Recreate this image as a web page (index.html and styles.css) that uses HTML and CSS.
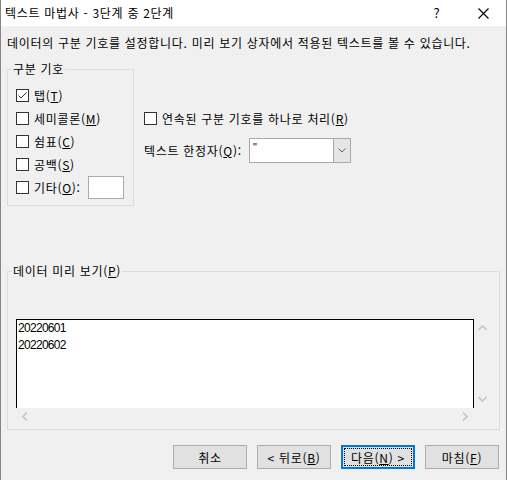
FILE: index.html
```html
<!DOCTYPE html>
<html lang="ko">
<head>
    <meta charset="UTF-8">
    <meta name="viewport" content="width=device-width, initial-scale=1.0">
    <title>텍스트 마법사 - 3단계 중 2단계</title>
    <link rel="stylesheet" href="styles.css">
</head>
<body>
    <div class="window">
        <!-- Title bar -->
        <div class="titlebar">
            <span class="title">텍스트 마법사 - 3단계 중 2단계</span>
            <span class="caption-btn">?</span>
            <span class="caption-btn">
                <svg width="11" height="11" viewBox="0 0 11 11"><path d="M0.5 0.5 L10.5 10.5 M10.5 0.5 L0.5 10.5" stroke="#000" stroke-width="1.1" fill="none"/></svg>
            </span>
        </div>

        <div class="content">
            <p class="desc">데이터의 구분 기호를 설정합니다. 미리 보기 상자에서 적용된 텍스트를 볼 수 있습니다.</p>

            <div class="top-row">
                <!-- Delimiters -->
                <fieldset class="group delims">
                    <legend>구분 기호</legend>
                    <div class="group-inner">
                        <label class="check">
                            <span class="box"><svg width="11" height="11" viewBox="0 0 11 11"><path d="M1.5 5.5 L4 8 L9.5 2.5" stroke="#333" stroke-width="1" fill="none"/></svg></span>
                            탭(<u>T</u>)
                        </label>
                        <label class="check"><span class="box"></span>세미콜론(<u>M</u>)</label>
                        <label class="check"><span class="box"></span>쉼표(<u>C</u>)</label>
                        <label class="check"><span class="box"></span>공백(<u>S</u>)</label>
                        <label class="check"><span class="box"></span>기타(<u>O</u>):<span class="other-input"></span></label>
                    </div>
                </fieldset>

                <div class="options">
                    <label class="check"><span class="box"></span>연속된 구분 기호를 하나로 처리(<u>R</u>)</label>
                    <div class="qualifier">
                        <span class="qualifier-label">텍스트 한정자(<u>Q</u>):</span>
                        <div class="combo">
                            <span class="combo-value">"</span>
                            <span class="combo-btn">
                                <svg width="8" height="5" viewBox="0 0 8 5"><path d="M0.5 0.5 L4 4 L7.5 0.5" stroke="#606060" stroke-width="1" fill="none"/></svg>
                            </span>
                        </div>
                    </div>
                </div>
            </div>

            <!-- Data preview -->
            <fieldset class="group preview">
                <legend>데이터 미리 보기(<u>P</u>)</legend>
                <div class="preview-inner">
                    <div class="preview-main">
                        <div class="preview-box">20220601<br>20220602</div>
                        <div class="hscroll">
                            <svg width="6" height="9" viewBox="0 0 6 9"><path d="M5 0.5 L1 4.5 L5 8.5" stroke="#c4c4c4" stroke-width="1.6" fill="none"/></svg>
                            <svg width="6" height="9" viewBox="0 0 6 9"><path d="M1 0.5 L5 4.5 L1 8.5" stroke="#c4c4c4" stroke-width="1.6" fill="none"/></svg>
                        </div>
                    </div>
                    <div class="vscroll">
                        <svg width="9" height="6" viewBox="0 0 9 6"><path d="M0.5 5 L4.5 1 L8.5 5" stroke="#c4c4c4" stroke-width="1.6" fill="none"/></svg>
                        <svg width="9" height="6" viewBox="0 0 9 6"><path d="M0.5 1 L4.5 5 L8.5 1" stroke="#c4c4c4" stroke-width="1.6" fill="none"/></svg>
                    </div>
                </div>
            </fieldset>

            <!-- Buttons -->
            <div class="buttons">
                <button class="btn">취소</button>
                <button class="btn">&lt; 뒤로(<u>B</u>)</button>
                <button class="btn btn-default">다음(<u>N</u>) &gt;</button>
                <button class="btn">마침(<u>F</u>)</button>
            </div>
        </div>
    </div>
</body>
</html>
```

FILE: styles.css
```css
* {
    box-sizing: border-box;
}

body {
    margin: 0;
    background-color: #f0f0f0;
    font-family: "Noto Sans CJK KR", "Noto Sans", sans-serif;
    font-size: 12px;
    letter-spacing: 0.7px;
    color: #000;
}

.window {
    width: 507px;
    height: 480px;
    border-left: 1px solid #858585;
    border-right: 1px solid #858585;
    background-color: #f0f0f0;
}

/* Title bar */
.titlebar {
    display: flex;
    align-items: center;
    height: 26px;
    background-color: #fff;
    line-height: 26px;
}

.title {
    flex: 1;
    padding-left: 4px;
}

.caption-btn {
    width: 46px;
    display: flex;
    justify-content: center;
    align-items: center;
    font-size: 13px;
}

.content {
    padding: 0 6px 0 6px;
}

.desc {
    margin: 8px 0 0 0;
    line-height: 17px;
    white-space: nowrap;
}

/* Group boxes */
.group {
    margin: 0;
    padding: 0;
    border: 1px solid #dcdcdc;
    min-width: 0;
}

.group legend {
    margin-left: 4px;
    padding: 0 1px;
    line-height: 14px;
}

.top-row {
    display: flex;
    margin-top: 11px;
}

.delims {
    width: 127px;
}

.group-inner {
    padding: 8px 8px 6px 8px;
}

.check {
    display: flex;
    align-items: center;
    height: 23px;
    white-space: nowrap;
}

.box {
    width: 13px;
    height: 13px;
    border: 1px solid #333;
    background-color: #fff;
    margin-right: 5px;
    display: flex;
    flex-shrink: 0;
}

.other-input {
    width: 36px;
    height: 23px;
    margin-left: auto;
    margin-right: 1px;
    border: 1px solid #ababab;
    background-color: #fff;
}

/* Right-hand options */
.options {
    margin-left: 10px;
    padding-top: 45px;
}

.qualifier {
    display: flex;
    align-items: center;
    margin-top: 8px;
}

.qualifier-label {
    width: 105px;
    white-space: nowrap;
}

.combo {
    display: flex;
    width: 102px;
    height: 25px;
    border: 1px solid #a9a9a9;
    background-color: #fff;
}

.combo-value {
    flex: 1;
    padding-left: 3px;
    line-height: 17px;
    font-family: "Liberation Sans", sans-serif;
    font-size: 11px;
}

.combo-btn {
    width: 17px;
    display: flex;
    align-items: center;
    justify-content: center;
    background-color: #e5e5e5;
    border-left: 1px solid #a9a9a9;
}

/* Preview */
.preview {
    width: 493px;
    margin-top: 58px;
}

.preview-inner {
    display: flex;
    padding: 41px 8px 4px 8px;
}

.preview-main {
    width: 458px;
}

.preview-box {
    height: 89px;
    border: 1px solid #000;
    border-bottom: none;
    background-color: #fff;
    padding-left: 1px;
    font-family: "Liberation Sans", sans-serif;
    font-size: 12px;
    letter-spacing: -0.7px;
    line-height: 17px;
}

.hscroll {
    height: 17px;
    display: flex;
    justify-content: space-between;
    align-items: center;
    padding: 0 6px 0 6px;
}

.vscroll {
    width: 17px;
    height: 89px;
    display: flex;
    flex-direction: column;
    justify-content: space-between;
    align-items: center;
    padding: 6px 0 6px 0;
}

/* Buttons */
.buttons {
    display: flex;
    justify-content: flex-end;
    gap: 10px;
    margin-top: 15px;
    margin-right: 1px;
}

.btn {
    width: 74px;
    height: 24px;
    padding: 0;
    background-color: #e1e1e1;
    border: 1px solid #adadad;
    font-family: "Noto Sans CJK KR", sans-serif;
    font-size: 12px;
    letter-spacing: 0.7px;
    color: #000;
}

.btn-default {
    border: 2px solid #0078d7;
    outline: 1px dotted #000;
    outline-offset: -4px;
}
```
